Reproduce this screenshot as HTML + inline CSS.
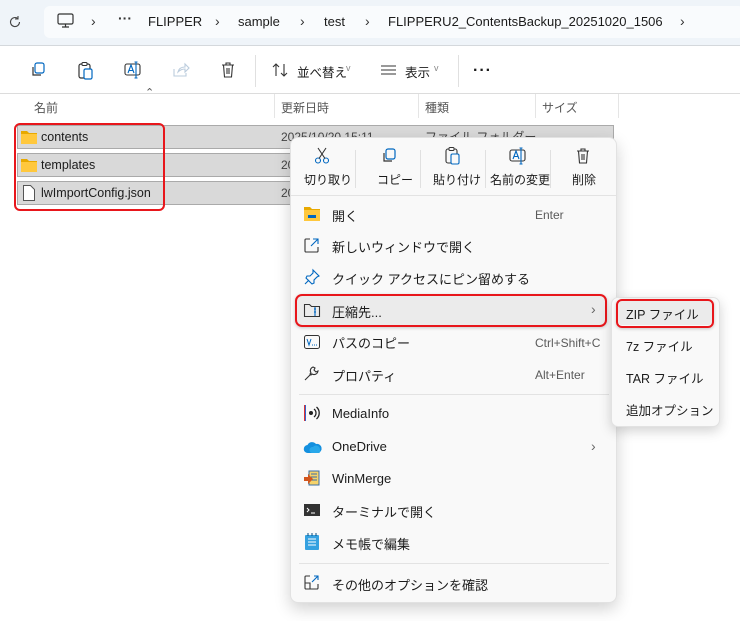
<!DOCTYPE html>
<html><head><meta charset="utf-8"><style>
*{margin:0;padding:0;box-sizing:border-box}
body{width:740px;height:621px;overflow:hidden;background:#fff;position:relative;font-family:"Liberation Sans","Noto Sans CJK JP",sans-serif;font-size:12.5px;color:#1b1b1b}
.a{position:absolute}
.t{position:absolute;white-space:nowrap}
svg{position:absolute;overflow:visible}
.mi{position:absolute;left:332px;white-space:nowrap;font-size:13px}
.sc{position:absolute;white-space:nowrap;font-size:12px;color:#5a5a5a}
</style></head><body>
<div class="a" style="left:0;top:0;width:740px;height:46px;background:#eff4f9;border-bottom:1px solid #d4d8dc"></div>
<div class="a" style="left:44px;top:6px;width:700px;height:32px;background:#f9fbfd;border-radius:6px"></div>
<svg style="left:8px;top:15px" width="14" height="14" viewBox="0 0 14 14"><path d="M11.5 7a4.5 4.5 0 1 1-1.6-3.4M10 1v3h-3" fill="none" stroke="#444" stroke-width="1.1"/></svg>
<svg style="left:57px;top:13px" width="18" height="16" viewBox="0 0 18 16"><rect x="1" y="1" width="15" height="10" rx="1.5" fill="none" stroke="#333" stroke-width="1.2"/><path d="M5 14h7M8.5 11v3" stroke="#333" stroke-width="1.2"/></svg>
<div class="t" style="left:91px;top:13px;font-size:14px;color:#333">›</div>
<div class="t" style="left:118px;top:10px;font-size:14px;color:#333;font-weight:bold">···</div>
<div class="t" style="left:148px;top:14px;font-size:13px">FLIPPER</div>
<div class="t" style="left:215px;top:13px;font-size:14px;color:#333">›</div>
<div class="t" style="left:238px;top:14px;font-size:13px">sample</div>
<div class="t" style="left:300px;top:13px;font-size:14px;color:#333">›</div>
<div class="t" style="left:324px;top:14px;font-size:13px">test</div>
<div class="t" style="left:365px;top:13px;font-size:14px;color:#333">›</div>
<div class="t" style="left:388px;top:14px;font-size:13px">FLIPPERU2_ContentsBackup_20251020_1506</div>
<div class="t" style="left:680px;top:13px;font-size:14px;color:#333">›</div>
<div class="a" style="left:0;top:93px;width:740px;height:1px;background:#dcdcdc"></div>
<svg style="left:30px;top:62px" width="16" height="16" viewBox="0 0 16 16"><rect x="5" y="1" width="9" height="10" rx="2" fill="none" stroke="#0067c0" stroke-width="1.2"/><path d="M3 5v8h8" fill="none" stroke="#333" stroke-width="1.2"/></svg>
<svg style="left:78px;top:62px" width="16" height="18" viewBox="0 0 16 18"><rect x="1" y="2" width="11" height="14" rx="2" fill="none" stroke="#333" stroke-width="1.2"/><rect x="4" y="0.5" width="5" height="3" rx="1" fill="#fff" stroke="#333"/><rect x="6" y="7" width="8" height="10" rx="1.5" fill="#fff" stroke="#0067c0" stroke-width="1.2"/></svg>
<svg style="left:124px;top:62px" width="18" height="16" viewBox="0 0 18 16"><rect x="1" y="2" width="15" height="11" rx="2" fill="none" stroke="#333" stroke-width="1.1"/><path d="M4 11l3-8 3 8M5 8.5h4M12 0v16M10.5 0h3M10.5 16h3" fill="none" stroke="#0067c0" stroke-width="1.1"/></svg>
<svg style="left:173px;top:63px" width="16" height="14" viewBox="0 0 16 14"><path d="M1 6v7h12v-3M5 9c1-4 4-5 7-5V1l4 4-4 4V6c-3 0-5 1-7 3z" fill="none" stroke="#bcd" stroke-width="1.1"/></svg>
<svg style="left:221px;top:62px" width="14" height="16" viewBox="0 0 14 16"><path d="M1 3h12M5 3V1h4v2M2.5 3l1 12h7l1-12M6 6v6M8 6v6" fill="none" stroke="#333" stroke-width="1.1"/></svg>
<div class="a" style="left:255px;top:55px;width:1px;height:32px;background:#e0e0e0"></div>
<svg style="left:272px;top:63px" width="18" height="14" viewBox="0 0 18 14"><path d="M4 13V1M1 4l3-3 3 3M12 1v12M9 10l3 3 3-3" fill="none" stroke="#333" stroke-width="1.1"/></svg>
<div class="t" style="left:297px;top:62px;font-size:12.5px">並べ替え</div>
<div class="t" style="left:346px;top:63px;font-size:9px;color:#888">v</div>
<svg style="left:381px;top:65px" width="16" height="12" viewBox="0 0 16 12"><path d="M0 1h15M0 5h15M0 9h15" stroke="#333" stroke-width="1"/></svg>
<div class="t" style="left:405px;top:62px;font-size:12.5px">表示</div>
<div class="t" style="left:434px;top:63px;font-size:9px;color:#888">v</div>
<div class="a" style="left:458px;top:55px;width:1px;height:32px;background:#e0e0e0"></div>
<div class="t" style="left:473px;top:62px;font-size:16px;font-weight:bold;letter-spacing:1px">···</div>
<div class="t" style="left:145px;top:86px;font-size:11px;color:#555">⌃</div>
<div class="t" style="left:34px;top:99px;font-size:12px;color:#555">名前</div>
<div class="a" style="left:274px;top:94px;width:1px;height:24px;background:#e5e5e5"></div>
<div class="t" style="left:281px;top:99px;font-size:12px;color:#555">更新日時</div>
<div class="a" style="left:418px;top:94px;width:1px;height:24px;background:#e5e5e5"></div>
<div class="t" style="left:425px;top:99px;font-size:12px;color:#555">種類</div>
<div class="a" style="left:535px;top:94px;width:1px;height:24px;background:#e5e5e5"></div>
<div class="t" style="left:542px;top:99px;font-size:12px;color:#555">サイズ</div>
<div class="a" style="left:618px;top:94px;width:1px;height:24px;background:#e5e5e5"></div>
<div class="a" style="left:17px;top:125px;width:597px;height:24px;background:#d9d9d9;border:1px solid #aaa"></div>
<div class="a" style="left:17px;top:153px;width:597px;height:24px;background:#d9d9d9;border:1px solid #aaa"></div>
<div class="a" style="left:17px;top:181px;width:597px;height:24px;background:#d9d9d9;border:1px solid #aaa"></div>
<svg style="left:21px;top:130px" width="16" height="14" viewBox="0 0 16 14"><path d="M0 1h6l2 2h8v11H0z" fill="#e8a900"/><rect x="0" y="4" width="16" height="10" fill="#ffc83d"/></svg>
<svg style="left:21px;top:158px" width="16" height="14" viewBox="0 0 16 14"><path d="M0 1h6l2 2h8v11H0z" fill="#e8a900"/><rect x="0" y="4" width="16" height="10" fill="#ffc83d"/></svg>
<svg style="left:23px;top:185px" width="12" height="16" viewBox="0 0 12 16"><path d="M.5.5h7l4 4v11H.5z" fill="#fff" stroke="#555"/></svg>
<div class="t" style="left:41px;top:130px;font-size:12.5px">contents</div>
<div class="t" style="left:41px;top:158px;font-size:12.5px">templates</div>
<div class="t" style="left:41px;top:186px;font-size:12.5px">lwImportConfig.json</div>
<div class="t" style="left:281px;top:130px;font-size:12px;color:#444">2025/10/20 15:11</div>
<div class="t" style="left:281px;top:158px;font-size:12px;color:#444">20</div>
<div class="t" style="left:281px;top:186px;font-size:12px;color:#444">20</div>
<div class="t" style="left:425px;top:128px;font-size:12px;color:#444">ファイル フォルダー</div>
<div class="a" style="left:14px;top:123px;width:151px;height:88px;border:2px solid #e8161b;border-radius:6px"></div>
<div class="a" style="left:290px;top:137px;width:327px;height:466px;background:#f9f9f9;border:1px solid #e2e2e2;border-radius:8px;box-shadow:0 6px 16px rgba(0,0,0,.18)"></div>
<svg style="left:314px;top:147px" width="16" height="17" viewBox="0 0 16 17"><circle cx="4" cy="13.5" r="2.5" fill="none" stroke="#0067c0" stroke-width="1.1"/><circle cx="12" cy="13.5" r="2.5" fill="none" stroke="#0067c0" stroke-width="1.1"/><path d="M5 11.5L12 1M11 11.5L4 1" stroke="#333" stroke-width="1.1"/></svg>
<div class="t" style="left:304px;top:171px;font-size:12px">切り取り</div>
<div class="a" style="left:355px;top:150px;width:1px;height:38px;background:#e0e0e0"></div>
<svg style="left:381px;top:148px" width="16" height="16" viewBox="0 0 16 16"><rect x="5" y="1" width="9" height="10" rx="2" fill="none" stroke="#0067c0" stroke-width="1.2"/><path d="M3 5v8h8" fill="none" stroke="#333" stroke-width="1.2"/></svg>
<div class="t" style="left:377px;top:171px;font-size:12px">コピー</div>
<div class="a" style="left:420px;top:150px;width:1px;height:38px;background:#e0e0e0"></div>
<svg style="left:445px;top:147px" width="16" height="18" viewBox="0 0 16 18"><rect x="1" y="2" width="11" height="14" rx="2" fill="none" stroke="#333" stroke-width="1.1"/><rect x="4" y="0.5" width="5" height="3" rx="1" fill="#f9f9f9" stroke="#333"/><rect x="6" y="7" width="8" height="10" rx="1.5" fill="#f9f9f9" stroke="#0067c0" stroke-width="1.1"/></svg>
<div class="t" style="left:433px;top:171px;font-size:12px">貼り付け</div>
<div class="a" style="left:485px;top:150px;width:1px;height:38px;background:#e0e0e0"></div>
<svg style="left:509px;top:148px" width="18" height="16" viewBox="0 0 18 16"><rect x="1" y="2" width="15" height="11" rx="2" fill="none" stroke="#333" stroke-width="1.1"/><path d="M4 11l3-8 3 8M5 8.5h4M12 0v16M10.5 0h3M10.5 16h3" fill="none" stroke="#0067c0" stroke-width="1.1"/></svg>
<div class="t" style="left:490px;top:171px;font-size:12px">名前の変更</div>
<div class="a" style="left:550px;top:150px;width:1px;height:38px;background:#e0e0e0"></div>
<svg style="left:576px;top:148px" width="14" height="16" viewBox="0 0 14 16"><path d="M1 3h12M5 3V1h4v2M2.5 3l1 12h7l1-12M6 6v6M8 6v6" fill="none" stroke="#333" stroke-width="1.1"/></svg>
<div class="t" style="left:572px;top:171px;font-size:12px">削除</div>
<div class="a" style="left:291px;top:195px;width:325px;height:1px;background:#e3e3e3"></div>
<svg style="left:304px;top:207px" width="16" height="14" viewBox="0 0 16 14"><path d="M0 0h6l2 2h8v12H0z" fill="#e8a900"/><rect x="0" y="3" width="16" height="11" fill="#ffc83d"/><rect x="4" y="8" width="8" height="3" fill="#0067c0"/></svg>
<div class="mi" style="top:206px">開く</div><div class="sc" style="left:535px;top:208px">Enter</div>
<svg style="left:304px;top:238px" width="15" height="15" viewBox="0 0 15 15"><path d="M6 1H2a1 1 0 0 0-1 1v11a1 1 0 0 0 1 1h11a1 1 0 0 0 1-1V9" fill="none" stroke="#333" stroke-width="1.1"/><path d="M7 8l7-7M9 1h5v5" fill="none" stroke="#0067c0" stroke-width="1.1"/></svg>
<div class="mi" style="top:237px">新しいウィンドウで開く</div>
<svg style="left:304px;top:269px" width="16" height="16" viewBox="0 0 16 16"><path d="M9 1l6 6-2 1-3 3 0 3-2 1-6-6 1-2 3 0 3-3zM5 11l-4 4" fill="none" stroke="#0067c0" stroke-width="1.1"/></svg>
<div class="mi" style="top:269px">クイック アクセスにピン留めする</div>
<div class="a" style="left:297px;top:296px;width:310px;height:30px;background:#ebebeb;border-radius:5px"></div>
<div class="a" style="left:295px;top:294px;width:312px;height:33px;border:2px solid #e8161b;border-radius:7px;box-shadow:0 1px 3px rgba(0,0,0,.2)"></div>
<svg style="left:304px;top:303px" width="16" height="14" viewBox="0 0 16 14"><path d="M.5 1.5h5l2 2h8v10H.5z" fill="none" stroke="#333" stroke-width="1.1"/><path d="M11 4v9M10 6h2M10 9h2" stroke="#0067c0" stroke-width="1.1"/></svg>
<div class="mi" style="top:302px">圧縮先...</div><div class="sc" style="left:591px;top:301px;font-size:14px;color:#666">›</div>
<svg style="left:304px;top:335px" width="16" height="14" viewBox="0 0 16 14"><rect x=".5" y=".5" width="15" height="13" rx="2" fill="none" stroke="#333"/><path d="M3 4l2 6 2-6M8 10h1M10 10h1M12 10h1" fill="none" stroke="#0067c0"/></svg>
<div class="mi" style="top:333px">パスのコピー</div><div class="sc" style="left:535px;top:336px">Ctrl+Shift+C</div>
<svg style="left:304px;top:366px" width="15" height="15" viewBox="0 0 15 15"><path d="M1 14l6-6M9 1a4 4 0 0 0-2 6l-1 1 1 1 1-1a4 4 0 0 0 6-3l-2 1-2-2 1-2z" fill="none" stroke="#333" stroke-width="1.1"/></svg>
<div class="mi" style="top:366px">プロパティ</div><div class="sc" style="left:535px;top:368px">Alt+Enter</div>
<div class="a" style="left:299px;top:394px;width:310px;height:1px;background:#e3e3e3"></div>
<svg style="left:304px;top:405px" width="17" height="16" viewBox="0 0 17 16"><rect x="0" y="0" width="2" height="16" fill="#d33"/><rect x="1" y="0" width="1" height="16" fill="#36c"/><circle cx="7" cy="8" r="2" fill="#222"/><path d="M10 4a5 5 0 0 1 0 8M12.5 2a8 8 0 0 1 0 12" fill="none" stroke="#222" stroke-width="1.3"/></svg>
<div class="mi" style="top:406px">MediaInfo</div>
<svg style="left:304px;top:441px" width="18" height="12" viewBox="0 0 18 12"><path d="M4 12a4 4 0 0 1-.5-8A5 5 0 0 1 12 3a4 4 0 0 1 2 9z" fill="#1490df"/><path d="M8 12a3 3 0 0 1 1-6 4 4 0 0 1 7 3 2 2 0 0 1-1 3z" fill="#28a8ea"/></svg>
<div class="mi" style="top:439px">OneDrive</div><div class="sc" style="left:591px;top:438px;font-size:14px;color:#666">›</div>
<svg style="left:304px;top:470px" width="16" height="16" viewBox="0 0 16 16"><rect x="5" y="1" width="10" height="14" fill="#f5d36a" stroke="#3a6ea5"/><path d="M7 4h6M7 7h6M7 10h6" stroke="#3a6ea5"/><path d="M0 7h4V4l5 5-5 5v-3H0z" fill="#d2561e"/></svg>
<div class="mi" style="top:471px">WinMerge</div>
<svg style="left:304px;top:504px" width="16" height="12" viewBox="0 0 16 12"><rect width="16" height="12" fill="#333"/><path d="M3 4l2 2-2 2M7 9h4" stroke="#fff" fill="none"/></svg>
<div class="mi" style="top:502px">ターミナルで開く</div>
<svg style="left:305px;top:533px" width="14" height="17" viewBox="0 0 14 17"><rect x="0" y="2" width="14" height="15" rx="1" fill="#35a1e0"/><path d="M3 6h8M3 9h8M3 12h8" stroke="#fff"/><path d="M3 0v3M7 0v3M11 0v3" stroke="#0a4d80"/></svg>
<div class="mi" style="top:534px">メモ帳で編集</div>
<div class="a" style="left:299px;top:563px;width:310px;height:1px;background:#e3e3e3"></div>
<svg style="left:304px;top:575px" width="15" height="15" viewBox="0 0 15 15"><path d="M6 1H2a1 1 0 0 0-1 1v11a1 1 0 0 0 1 1h11a1 1 0 0 0 1-1V9M1 8h5v6" fill="none" stroke="#333" stroke-width="1.1"/><path d="M8 7l6-6M10 1h4v4" fill="none" stroke="#0067c0" stroke-width="1.1"/></svg>
<div class="mi" style="top:575px">その他のオプションを確認</div>
<div class="a" style="left:611px;top:297px;width:109px;height:130px;background:#f9f9f9;border:1px solid #e2e2e2;border-radius:7px;box-shadow:0 4px 12px rgba(0,0,0,.18)"></div>
<div class="a" style="left:618px;top:301px;width:94px;height:24px;background:#ebebeb;border-radius:4px"></div>
<div class="a" style="left:616px;top:299px;width:98px;height:29px;border:2px solid #e8161b;border-radius:6px;box-shadow:0 1px 3px rgba(0,0,0,.2)"></div>
<div class="t" style="left:626px;top:304px;font-size:12.5px">ZIP ファイル</div>
<div class="t" style="left:626px;top:336px;font-size:12.5px">7z ファイル</div>
<div class="t" style="left:626px;top:368px;font-size:12.5px">TAR ファイル</div>
<div class="t" style="left:626px;top:400px;font-size:12.5px">追加オプション</div>
</body></html>
